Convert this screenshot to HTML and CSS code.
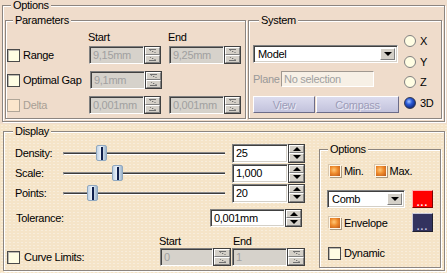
FILE: index.html
```html
<!DOCTYPE html>
<html>
	<head>
		<title>Options</title>
		<meta charset="utf-8" />
		<link rel="stylesheet" href="styles.css">
	</head>
	<body>
		<div id="top">
			<fieldset id="options" class="grp">
				<legend>Options</legend>
				<div class="pair">
					<fieldset id="params" class="grp">
						<legend>Parameters</legend>
						<div class="heads"><span class="h1">Start</span><span>End</span></div>
						<div class="prow">
							<label class="chk"><span class="box"></span>Range</label>
							<div class="spin off"><input value="9,15mm" disabled /><span class="arr"><i></i><i></i></span></div>
							<div class="spin off"><input value="9,25mm" disabled /><span class="arr"><i></i><i></i></span></div>
						</div>
						<div class="prow">
							<label class="chk"><span class="box"></span>Optimal Gap</label>
							<div class="spin off"><input value="9,1mm" disabled /><span class="arr"><i></i><i></i></span></div>
						</div>
						<div class="prow">
							<label class="chk dis"><span class="box"></span>Delta</label>
							<div class="spin off"><input value="0,001mm" disabled /><span class="arr"><i></i><i></i></span></div>
							<div class="spin off"><input value="0,001mm" disabled /><span class="arr"><i></i><i></i></span></div>
						</div>
					</fieldset>
					<fieldset id="system" class="grp">
						<legend>System</legend>
						<div class="sys">
							<div class="sys-main">
								<div class="combo model"><span>Model</span><b class="drop"></b></div>
								<div class="plane"><span>Plane</span><input value="No selection" disabled /></div>
								<div class="btns"><div class="btn view">View</div><div class="btn compass">Compass</div></div>
							</div>
							<div class="radios">
								<label class="rad"><span class="dot"></span>X</label>
								<label class="rad"><span class="dot"></span>Y</label>
								<label class="rad"><span class="dot"></span>Z</label>
								<label class="rad"><span class="dot on"></span>3D</label>
							</div>
						</div>
					</fieldset>
				</div>
			</fieldset>
		</div>
		<div id="bottom">
			<fieldset id="display" class="grp">
				<legend>Display</legend>
				<div class="dbody">
					<div class="dleft">
						<div class="srow">
							<span class="lbl">Density:</span>
							<div class="slider"><span class="track"></span><span class="thumb" style="left: 33px"></span></div>
							<div class="spin"><input value="25" /><span class="arr"><i class="up"></i><i class="down"></i></span></div>
						</div>
						<div class="srow">
							<span class="lbl">Scale:</span>
							<div class="slider"><span class="track"></span><span class="thumb" style="left: 49px"></span></div>
							<div class="spin"><input value="1,000" /><span class="arr"><i class="up"></i><i class="down"></i></span></div>
						</div>
						<div class="srow">
							<span class="lbl">Points:</span>
							<div class="slider"><span class="track"></span><span class="thumb" style="left: 24px"></span></div>
							<div class="spin"><input value="20" /><span class="arr"><i class="up"></i><i class="down"></i></span></div>
						</div>
						<div class="trow">
							<span class="lbl">Tolerance:</span>
							<div class="spin tol"><input value="0,001mm" /><span class="arr"><i class="up"></i><i class="down"></i></span></div>
						</div>
						<div class="heads2"><span class="h1">Start</span><span>End</span></div>
						<div class="crow">
							<label class="chk"><span class="box"></span>Curve Limits:</label>
							<div class="spin off s1"><input value="0" disabled /><span class="arr"><i></i><i></i></span></div>
							<div class="spin off s2"><input value="1" disabled /><span class="arr"><i></i><i></i></span></div>
						</div>
					</div>
					<fieldset id="dopts" class="grp">
						<legend>Options</legend>
						<div class="mm">
							<label class="chk"><span class="ochk"></span>Min.</label>
							<label class="chk max"><span class="ochk"></span>Max.</label>
						</div>
						<div class="orow comb-row">
							<div class="combo comb"><span>Comb</span><b class="drop"></b></div>
							<div class="clr red"><span>...</span></div>
						</div>
						<div class="orow env-row">
							<label class="chk"><span class="ochk"></span>Envelope</label>
							<div class="clr navy"><span>...</span></div>
						</div>
						<div class="orow dyn-row">
							<label class="chk"><span class="box"></span>Dynamic</label>
						</div>
					</fieldset>
				</div>
			</fieldset>
		</div>
	</body>
</html>
```

FILE: styles.css
```css
*{ box-sizing: border-box; }
body{ margin: 0; width: 447px; height: 273px; overflow: hidden;
	font: 11px/12px "Liberation Sans", Arial, sans-serif; letter-spacing: -0.3px; color: #000; }
#top{ height: 124px; background: #efdccb; overflow: hidden; }
#bottom{ height: 149px; background: #f5e4c8; padding-top: 1px;
	background-image: radial-gradient(rgba(255,255,255,0.35) 0.6px, transparent 0.8px); background-size: 4px 3px; }

/* etched group boxes */
.grp{ margin: 0; min-width: 0; padding: 0;
	border: 1px solid #8c8580; box-shadow: inset 1px 1px 0 #fff, 1px 1px 0 #fff; }
.grp legend{ padding: 0 2px; line-height: 12px; }
#top legend{ background: #efdccb; }
#bottom legend{ background: #f5e4c8; }

#options{ margin: -1px 2px 0; padding: 3px 2px 2px 2px; }
#options > legend{ margin-left: 6px; }
.pair{ display: flex; gap: 2px; }

#params{ width: 241px; padding: 5px 4px 4px 1px; }
#params legend{ margin-left: 6px; }
.heads{ display: flex; height: 12px; margin-bottom: 3px; }
.heads .h1{ margin-left: 81px; width: 80px; }
.prow{ display: flex; align-items: center; height: 18px; margin-bottom: 7px; }
.prow:last-child{ margin-bottom: 0; }
.prow .chk{ width: 83px; }
.prow .spin + .spin{ margin-left: 8px; }

.chk{ display: flex; align-items: center; gap: 3px; white-space: nowrap; }
.box{ width: 13px; height: 13px; background: #fffde3;
	border: 1px solid #4a4a4a; box-shadow: inset 1px 1px 0 #bcb8b0; flex: none; }
.chk.dis{ color: #a89f95; }
.chk.dis .box{ background: #fbe6cc; border-color: #b0a698; box-shadow: none; }
.ochk{ width: 12px; height: 12px; flex: none; border: 1px solid #fff6e6;
	background: radial-gradient(circle at 40% 40%, #ffc878 0, #ee8a2c 45%, #b8561a 100%);
	box-shadow: 1px 1px 0 #a89880, -1px -1px 0 #d8c8b0; }

/* text fields with spinner */
input{ font: inherit; letter-spacing: inherit; margin: 0; outline: none; color: #000; background: #fff;
	border: 1px solid; border-color: #808080 #fff #fff #808080;
	box-shadow: inset 1px 1px 0 #404040, inset -1px -1px 0 #d4d0c8; padding: 0 3px; }
input:disabled{ color: #a0a0a0; background: #d6d2cb; }
.spin{ display: flex; height: 18px; }
.spin input{ width: 55px; height: 100%; }
.arr{ width: 17px; height: 100%; display: flex; flex-direction: column;
	border: 1px solid #404040; background: #d4d0c8; }
.arr i{ flex: 1; display: flex; align-items: center; justify-content: center;
	border: 1px solid; border-color: #fff #808080 #808080 #fff; }
.arr i.up::after{ content: ""; border: 4px solid transparent; border-top: 0; border-bottom: 4px solid #000; }
.arr i.down::after{ content: ""; border: 4px solid transparent; border-bottom: 0; border-top: 4px solid #000; }
.off .arr i::after{ content: ""; width: 7px; height: 3px;
	border-top: 1px solid #707070; background: linear-gradient(to top right, transparent 45%, #707070 50%, transparent 60%); }
.off .arr i + i::after{ border-top: 0; border-bottom: 1px solid #707070; }

/* system */
#system{ flex: 1; padding: 0 2px 0 4px; }
#system legend{ margin-left: 6px; }
.sys{ display: flex; }
.sys-main{ width: 147px; margin-top: 19px; }
.combo{ display: flex; align-items: center; height: 18px; background: #fff;
	border: 1px solid; border-color: #808080 #fff #fff #808080;
	box-shadow: inset 1px 1px 0 #404040, inset -1px -1px 0 #d4d0c8; padding: 2px; }
.combo span{ flex: 1; padding-left: 2px; }
.drop{ width: 15px; height: 100%; background: #d4d0c8; display: flex; align-items: center; justify-content: center;
	border: 1px solid; border-color: #fff #808080 #808080 #fff; }
.drop::after{ content: ""; border: 4px solid transparent; border-bottom: 0; border-top: 4px solid #000; }
.model{ width: 145px; }
.plane{ display: flex; align-items: center; margin-top: 8px; height: 16px; color: #999; }
.plane span{ width: 28px; }
.plane input{ width: 93px; height: 16px; background: #f7f0e6; color: #a0a0a0;
	border-color: #a09890 #fff #fff #a09890; box-shadow: none; padding: 0 2px; }
.btns{ display: flex; gap: 1px; margin-top: 9px; }
.btn{ height: 17px; display: flex; align-items: center; justify-content: center;
	background: linear-gradient(#dcdcee, #c2c2dc); border: 1px solid; border-color: #fff #6c6c88 #6c6c88 #fff;
	color: #9c9cb8; text-shadow: 1px 1px 0 #ececf6; }
.view{ width: 62px; }
.compass{ width: 83px; }
.radios{ margin-left: 4px; padding-top: 5px; }
.rad{ display: flex; align-items: center; gap: 4px; height: 20.6px; }
.dot{ width: 12px; height: 12px; border-radius: 50%; background: #fffde3; border: 1px solid #808080; }
.dot.on{ border-color: #303850; background: radial-gradient(circle at 40% 35%, #a8c8ff 0, #2a5ad8 35%, #0a1f6a 85%); }

/* display */
#display{ margin: 0 2px 0 3px; padding: 6px 3px 2px 3px; }
#display > legend{ margin-left: 6px; }
.dbody{ display: flex; }
.dleft{ width: 300px; }
.srow{ display: flex; align-items: center; height: 20px; }
.srow .lbl{ width: 56px; padding-left: 8px; }
.srow .spin{ height: 19px; margin-left: 7px; }
.srow .spin input{ width: 56px; }
.slider{ position: relative; width: 162px; height: 20px; }
.track{ position: absolute; left: 0; right: 0; top: 9px; height: 3px;
	border-top: 1px solid #8a8a8a; background: #3c3c3c; border-bottom: 1px solid #fff; border-left: 1px solid #8a8a8a; }
.thumb{ position: absolute; top: 2px; width: 11px; height: 16px; border-radius: 2px;
	border: 1px solid #90a8c0; background: linear-gradient(90deg, #c0d2e4, #eef4fa 45%, #9cb4cc); }
.thumb::after{ content: ""; position: absolute; left: 4px; top: 1px; bottom: 0; width: 2px; background: #10204c; }
.trow{ display: flex; align-items: center; height: 18px; margin-top: 6px; }
.trow .lbl{ width: 203px; padding-left: 9px; }
.tol input{ width: 75px; }
.heads2{ display: flex; height: 12px; margin-top: 8px; }
.heads2 .h1{ margin-left: 152px; width: 74px; }
.crow{ display: flex; align-items: center; height: 18px; margin-top: 1px; }
.crow .chk{ width: 153px; gap: 4px; }
.crow .s1 input{ width: 53px; }
.crow .s2{ margin-left: 1px; }
.crow .arr{ width: 18px; }

#dopts{ width: 122px; margin-left: 12px; padding: 0 6px 7px 7px; }
#dopts legend{ margin-left: 1px; }
.mm{ display: flex; align-items: center; height: 14px; margin-top: 9px; padding-left: 2px; }
.mm .chk{ gap: 3px; }
.mm .max{ margin-left: 11px; }
.orow{ display: flex; align-items: center; }
.comb-row{ height: 18px; margin-top: 12px; }
.comb{ width: 78px; }
.env-row{ height: 19px; margin-top: 5px; padding-left: 2px; }
.env-row .chk{ width: 83px; }
.dyn-row{ height: 14px; margin-top: 14px; padding-left: 1px; }
.clr{ width: 21px; height: 18px; margin-left: 7px; display: flex; align-items: flex-end; justify-content: center;
	border: 1px solid; font-weight: bold; font-size: 10px; line-height: 8px; letter-spacing: 1px; }
.red{ background: #ff0000; color: #fff; border-color: #ffb0b0 #800000 #800000 #ffb0b0; }
.navy{ height: 19px; margin-left: 0; background: #33335f; color: #c8c8e0; border-color: #c8c8d8 #202030 #202030 #c8c8d8; }
```
